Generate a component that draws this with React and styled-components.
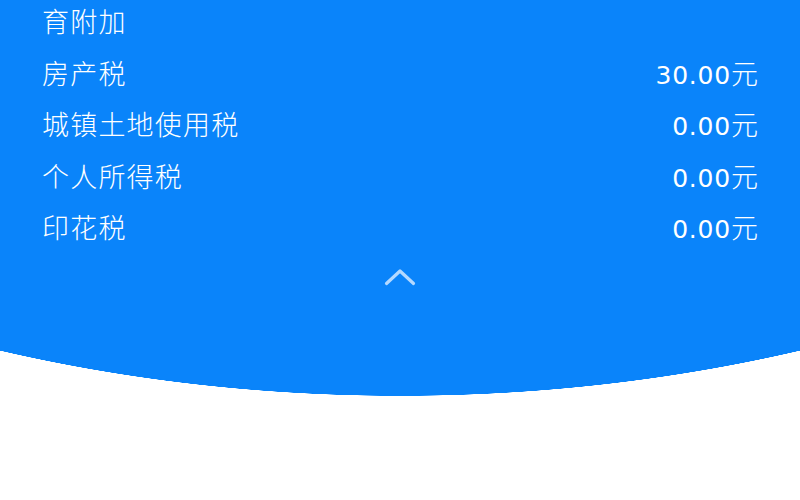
import React from "react";
import styled, { createGlobalStyle } from "styled-components";

const GlobalStyle = createGlobalStyle`
  html, body {
    margin: 0;
    padding: 0;
    background: #ffffff;
  }
  body {
    font-family: "Noto Sans CJK SC", "Noto Sans", sans-serif;
    -webkit-font-smoothing: antialiased;
  }
`;

const taxes = [
  { name: "育附加", amount: null },
  { name: "房产税", amount: "30.00" },
  { name: "城镇土地使用税", amount: "0.00" },
  { name: "个人所得税", amount: "0.00" },
  { name: "印花税", amount: "0.00" },
];

// Tax breakdown panel: blue card with a wide curved bottom edge
const App = () => {
  return (
    <Page>
      <GlobalStyle />
      <Panel>
        <TaxList>
          {taxes.map((t) => (
            <TaxRow key={t.name}>
              <TaxName>{t.name}</TaxName>
              {t.amount && (
                <TaxAmount>
                  {t.amount}
                  <Unit>元</Unit>
                </TaxAmount>
              )}
            </TaxRow>
          ))}
        </TaxList>
        <Collapse aria-label="收起">
          <svg width="34" height="20" viewBox="0 0 34 20" fill="none">
            <path
              d="M3.5 16.5 L17 4 L30.5 16.5"
              stroke="#b4d9ff"
              strokeWidth="3.2"
              strokeLinecap="round"
              strokeLinejoin="round"
            />
          </svg>
        </Collapse>
      </Panel>
    </Page>
  );
};

const Page = styled.div`
  width: 800px;
  height: 500px;
  overflow: hidden;
  background: #ffffff;
`;

const Panel = styled.section`
  height: 396px;
  display: flex;
  flex-direction: column;
  align-items: stretch;
  /* big ellipse whose lowest point sits at the bottom of the panel */
  background: radial-gradient(
    ellipse 1200px 790px at 50% -394px,
    #0a84fa calc(100% - 0.6px),
    rgba(10, 132, 250, 0) 100%
  );
`;

const TaxList = styled.ul`
  list-style: none;
  margin: -5px 0 0;
  padding: 0 42px 0 42px;
`;

const TaxRow = styled.li`
  height: 51.5px;
  display: flex;
  align-items: center;
  justify-content: space-between;
  color: #ffffff;
  font-size: 27px;
  font-weight: 300;
`;

const TaxName = styled.span`
  letter-spacing: 1.2px;
`;

const TaxAmount = styled.span`
  display: flex;
  align-items: baseline;
  font-family: "DejaVu Sans", "Noto Sans CJK SC", sans-serif;
  font-size: 25px;
  font-weight: 400;
  letter-spacing: 0.8px;
`;

const Unit = styled.span`
  font-family: "Noto Sans CJK SC", sans-serif;
  font-size: 27px;
  font-weight: 300;
  letter-spacing: 0;
  margin-left: 0;
`;

const Collapse = styled.button`
  align-self: center;
  margin-top: 12px;
  width: 40px;
  height: 24px;
  padding: 0;
  border: none;
  background: transparent;
  display: flex;
  align-items: center;
  justify-content: center;
  cursor: pointer;
`;

export default App;
